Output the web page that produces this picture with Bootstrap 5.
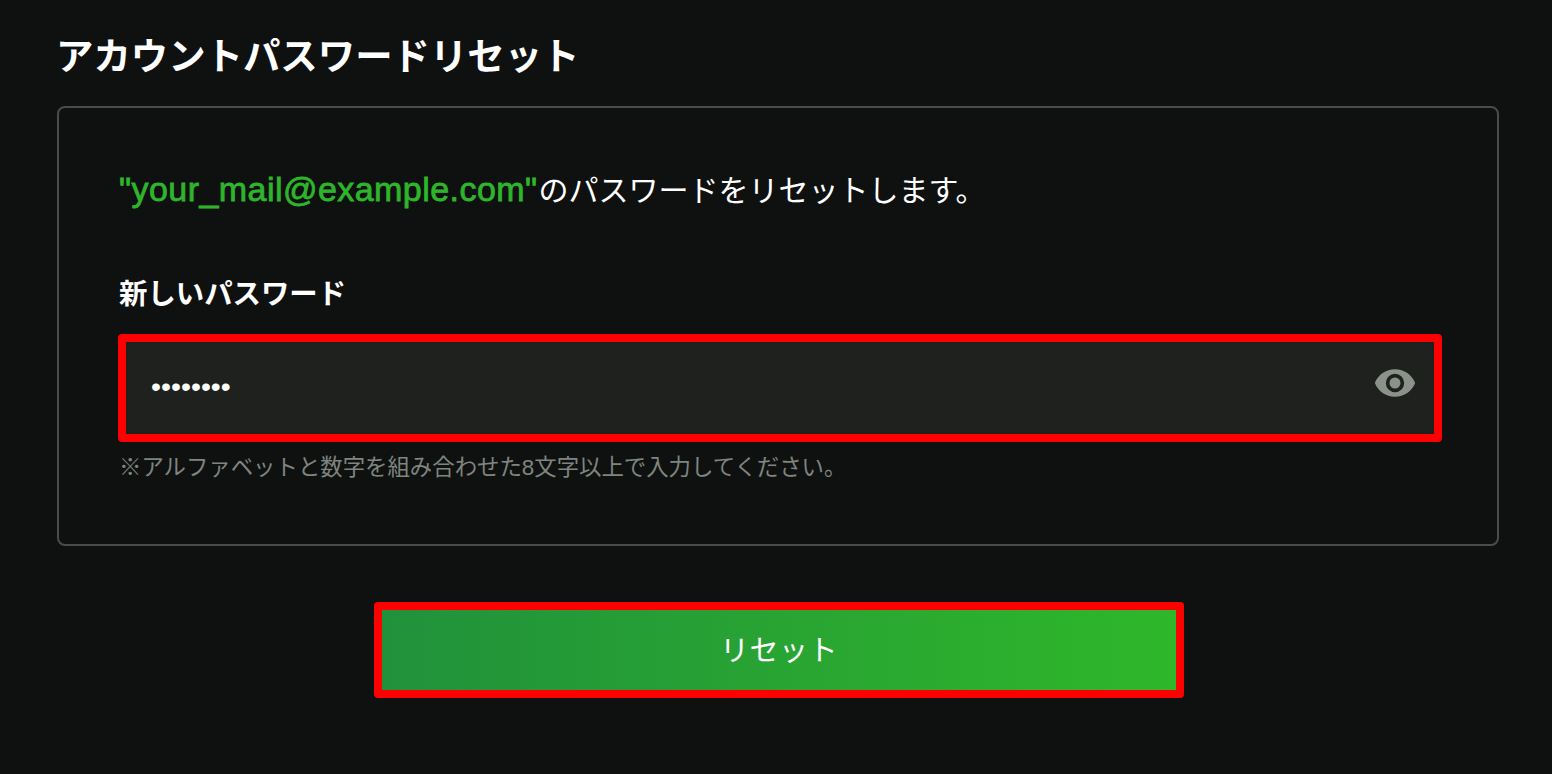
<!DOCTYPE html>
<html lang="ja">
<head>
<meta charset="utf-8">
<title>アカウントパスワードリセット</title>
<link href="https://cdn.jsdelivr.net/npm/bootstrap@5.3.0/dist/css/bootstrap.min.css" rel="stylesheet">
<style>
html,body{height:100%}
body{background:#0f1111;color:#fff;font-family:"Liberation Sans","Noto Sans CJK JP",sans-serif;overflow:hidden}
.page-wrap{padding:32px 53px 0 57px}
.page-title{font-size:37.4px;line-height:50px;font-weight:700;margin:0 0 24px -1px}
.panel-box{height:440px;border:2px solid #4a4c48;border-radius:8px;padding:61px 55px 0 59px;background:transparent}
.intro-line{font-size:30px;line-height:44px;margin:0 0 61px}
.mail-text{color:#2fb52b;font-size:34px;line-height:1;letter-spacing:.45px;-webkit-text-stroke:.8px #2fb52b;margin:0 1px}
.field-label{display:block;font-size:28.4px;line-height:40px;font-weight:700;margin:0 0 20px 1px}
.field-box{height:108px;border:8px solid #f00;border-radius:4px;background:#1f211e;padding:0 17px 0 25px}
.field-input{flex:1 1 auto;min-width:0;background:transparent;border:0;outline:0;color:#fff;font-size:28.5px;letter-spacing:0;padding:0 0 4px;box-shadow:none}
.eye-icon{width:44px;height:44px;flex:none;fill:#8a928a;margin-bottom:10px}
.hint-text{font-size:22.4px;line-height:34px;color:#7f857f;margin:9px 0 0 1px}
.reset-btn{width:810px;height:96px;border:8px solid #f00;border-radius:4px;background:linear-gradient(90deg,#21913b,#2fb72a);color:#fff;font-size:29px;letter-spacing:.5px;padding:3px 0 0}
.reset-btn:hover,.reset-btn:active{background:linear-gradient(90deg,#21913b,#2fb72a);border-color:#f00;color:#fff}
.btn-row{margin-top:56px;padding-left:2px}
</style>
</head>
<body>
<main class="page-wrap">
  <h1 class="page-title">アカウントパスワードリセット</h1>
  <section class="panel-box">
    <p class="intro-line"><span class="mail-text">"your_mail@example.com"</span>のパスワードをリセットします。</p>
    <label class="field-label" for="pw">新しいパスワード</label>
    <div class="field-box d-flex align-items-center">
      <input id="pw" class="field-input" type="password" value="12345678">
      <svg class="eye-icon" viewBox="0 0 24 24" aria-hidden="true"><path fill-rule="evenodd" d="M12 4.5C7 4.5 2.73 7.61 1 12c1.73 4.39 6 7.5 11 7.5s9.27-3.11 11-7.5c-1.73-4.39-6-7.5-11-7.5zM12 17a5 5 0 1 1 0-10 5 5 0 0 1 0 10zm0-8a3 3 0 1 0 0 6 3 3 0 0 0 0-6z"/></svg>
    </div>
    <p class="hint-text">※アルファベットと数字を組み合わせた8文字以上で入力してください。</p>
  </section>
  <div class="btn-row d-flex justify-content-center">
    <button type="button" class="btn reset-btn">リセット</button>
  </div>
</main>
<script src="https://cdn.jsdelivr.net/npm/bootstrap@5.3.0/dist/js/bootstrap.bundle.min.js"></script>
</body>
</html>
